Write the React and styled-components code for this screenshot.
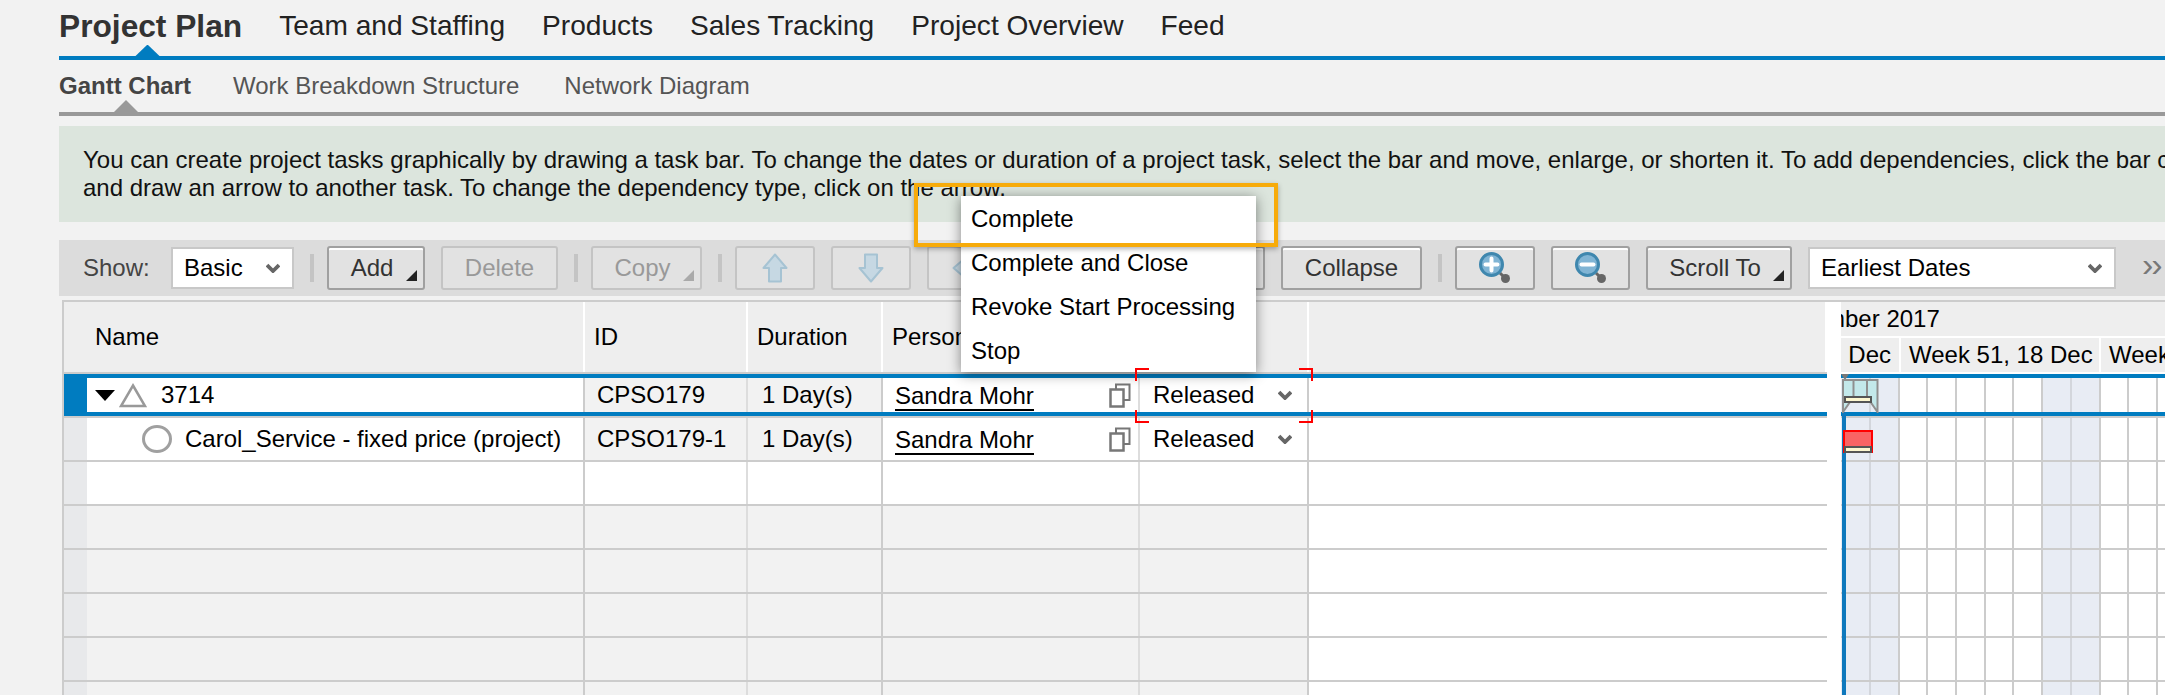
import React from 'react';
import styled, { createGlobalStyle } from 'styled-components';

const mainTabs = ['Team and Staffing', 'Products', 'Sales Tracking', 'Project Overview', 'Feed'];
const menuItems = ['Complete', 'Complete and Close', 'Revoke Start Processing', 'Stop'];
const emptyRows = [false, true, true, true, true, true];

// weekend columns of the gantt grid
const days = [true, true, false, false, false, false, false, true, true, false, false, false];

const Chevron = () => (
  <ChevronIcon viewBox="0 0 14 10">
    <path d="M1 2 L7 8 L13 2" fill="none" stroke="#666" strokeWidth="3.8" />
  </ChevronIcon>
);

const Arrow = ({ rotate }) => (
  <svg width="26" height="30" viewBox="0 0 26 30" style={{ transform: `rotate(${rotate}deg)` }}>
    <path d="M13 1.5 L24.5 15 L19 15 L19 28.5 L7 28.5 L7 15 L1.5 15 Z" fill="#c6d8e3" stroke="#a6c3d3" strokeWidth="2" strokeLinejoin="round" />
  </svg>
);

const Magnifier = ({ minus }) => (
  <svg width="32" height="32" viewBox="0 0 32 32">
    <path d="M21 21 L27 27" stroke="#666" strokeWidth="3" />
    <circle cx="26.5" cy="26.5" r="4.5" fill="#666" />
    <circle cx="12.5" cy="12.5" r="11" fill="#80b4d4" stroke="#3f87ae" strokeWidth="3" />
    <path d={minus ? 'M6.5 12.5 H18.5' : 'M6.5 12.5 H18.5 M12.5 6.5 V18.5'} stroke="#fff" strokeWidth="4" strokeLinecap="round" />
  </svg>
);

const CopyIcon = () => (
  <svg width="22" height="25" viewBox="0 0 22 25">
    <path d="M7 6 V1.5 H20.5 V17 H15" fill="none" stroke="#777" strokeWidth="2" />
    <rect x="1.5" y="6.5" width="13" height="17" fill="#fff" stroke="#777" strokeWidth="2.5" />
  </svg>
);

const ExpandIcon = () => (
  <svg width="20" height="11" viewBox="0 0 20 11">
    <path d="M0 0 H20 L10 11 Z" fill="#000" />
  </svg>
);

const TriangleIcon = () => (
  <svg width="28" height="25" viewBox="0 0 28 25">
    <path d="M14 2.5 L26 23 H2 Z" fill="#fff" stroke="#999" strokeWidth="2.5" />
  </svg>
);

const CircleIcon = () => (
  <svg width="30" height="28" viewBox="0 0 30 28">
    <ellipse cx="15" cy="14" rx="13.5" ry="12.5" fill="#fff" stroke="#a0a0a0" strokeWidth="3" />
  </svg>
);

const SummaryBar = () => (
  <svg width="37" height="34" viewBox="0 0 37 34">
    <path d="M1 1 H35.5 V33 L28.5 23 H8 L1 33 Z" fill="#c3e8ea" stroke="#8f8f8f" strokeWidth="2" />
    <path d="M11.5 1 V18 M25 1 V18" stroke="#8f8f8f" strokeWidth="2" />
  </svg>
);

const TreeRows = () => (
  <>
    <Row $selected>
      <Marker $selected />
      <NameCell>
        <ExpandIcon />
        <TriangleIcon />
        <NameText $gap={10}>3714</NameText>
      </NameCell>
      <Cell $width={163} $muted $light>CPSO179</Cell>
      <Cell $width={135} $pad={14} $muted>1 Day(s)</Cell>
      <PersonCell>
        <PersonLink>Sandra Mohr</PersonLink>
        <CopyIcon />
      </PersonCell>
      <StatusCell>
        Released
        <Chevron />
      </StatusCell>
      <RestCell />
    </Row>
    <Row $second>
      <Marker />
      <NameCell $indent={55}>
        <CircleIcon />
        <NameText $gap={9}>Carol_Service - fixed price (project)</NameText>
      </NameCell>
      <Cell $width={163} $muted $light>CPSO179-1</Cell>
      <Cell $width={135} $pad={14} $muted>1 Day(s)</Cell>
      <PersonCell>
        <PersonLink>Sandra Mohr</PersonLink>
        <CopyIcon />
      </PersonCell>
      <StatusCell>
        Released
        <Chevron />
      </StatusCell>
      <RestCell />
    </Row>
    {emptyRows.map((filled, index) => (
      <Row key={index}>
        <Marker />
        <NameCell $filled={filled} />
        <Cell $width={163} $muted={filled} $light />
        <Cell $width={135} $muted={filled} />
        <PersonCell $filled={filled} />
        <StatusCell $filled={filled} />
        <RestCell />
      </Row>
    ))}
  </>
);

const GanttRow = ({ selected, second }) => (
  <GanttLine $selected={selected} $second={second}>
    {days.map((weekend, index) => (
      <DayCell key={index} $first={index === 0} $weekend={weekend} $inner={index === 0 || index === 7} />
    ))}
  </GanttLine>
);

const App = () => (
  <Page>
    <GlobalStyle />
    <MainTabs>
      <ActiveMainTab>Project Plan</ActiveMainTab>
      {mainTabs.map((tab) => (
        <MainTab key={tab}>{tab}</MainTab>
      ))}
    </MainTabs>
    <SubTabs>
      <ActiveSubTab>Gantt Chart</ActiveSubTab>
      <SubTab>Work Breakdown Structure</SubTab>
      <SubTab $shift={3}>Network Diagram</SubTab>
    </SubTabs>
    <InfoBox>
      You can create project tasks graphically by drawing a task bar. To change the dates or duration of a project task, select the bar and move, enlarge, or shorten it. To add dependencies, click the bar connector
      <br />
      and draw an arrow to another task. To change the dependency type, click on the arrow.
    </InfoBox>
    <Toolbar>
      <ShowLabel>Show:</ShowLabel>
      <Select $width={123}>
        Basic
        <Chevron />
      </Select>
      <Separator />
      <ToolButton $width={98} $menu>Add</ToolButton>
      <ToolButton $width={117} disabled>Delete</ToolButton>
      <Separator />
      <ToolButton $width={111} $menu disabled>Copy</ToolButton>
      <Separator />
      <ToolButton $width={80} disabled><Arrow rotate={0} /></ToolButton>
      <ToolButton $width={80} disabled><Arrow rotate={180} /></ToolButton>
      <ToolButton $width={80} disabled><Arrow rotate={270} /></ToolButton>
      <ToolButton $width={80} disabled><Arrow rotate={90} /></ToolButton>
      <ToolButton $width={146}>Expand</ToolButton>
      <ToolButton $width={141}>Collapse</ToolButton>
      <Separator />
      <ToolButton $width={80}><Magnifier /></ToolButton>
      <ToolButton $width={79}><Magnifier minus /></ToolButton>
      <ToolButton $width={146} $menu>Scroll To</ToolButton>
      <Select $width={308}>
        Earliest Dates
        <Chevron />
      </Select>
      <Overflow>››</Overflow>
    </Toolbar>
    <Content>
      <TreeTable>
        <HeaderRow>
          <Marker $header />
          <HeaderCell $width={498} $indent={8}>Name</HeaderCell>
          <HeaderCell $width={163}>ID</HeaderCell>
          <HeaderCell $width={135}>Duration</HeaderCell>
          <HeaderCell $width={257}>Person Responsible</HeaderCell>
          <HeaderCell $width={169}>Status</HeaderCell>
          <HeaderCell $width={518} />
        </HeaderRow>
        <TreeRows />
      </TreeTable>
      <Splitter />
      <Gantt>
        <MonthRow>
          <MonthLabel>December 2017</MonthLabel>
        </MonthRow>
        <WeekRow>
          <WeekCell $width={58} $clip>Week 50, 11 Dec</WeekCell>
          <WeekCell $width={198}>Week 51, 18 Dec</WeekCell>
          <WeekCell $width={200}>Week 52, 25 Dec</WeekCell>
        </WeekRow>
        <GanttRow selected />
        <GanttRow second />
        {emptyRows.map((_, index) => (
          <GanttRow key={index} />
        ))}
        <TodayLine />
        <TodayNotch />
        <SummaryMark>
          <SummaryBar />
        </SummaryMark>
        <ProgressBar $top={94} />
        <TaskBar />
        <ProgressBar $top={144} />
      </Gantt>
    </Content>

    <ActionMenu>
      {menuItems.map((item) => (
        <MenuItem key={item}>{item}</MenuItem>
      ))}
    </ActionMenu>
    <Highlight />
    <FocusCorners>
      <Corner $top $left />
      <Corner $top />
      <Corner $left />
      <Corner />
    </FocusCorners>
  </Page>
);

// Estilos
const GlobalStyle = createGlobalStyle`
  html, body {
    margin: 0;
    padding: 0;
    background: #f2f2f2;
  }

  * {
    box-sizing: border-box;
  }
`;

const Page = styled.div`
  position: relative;
  width: 2165px;
  height: 695px;
  padding-left: 59px;
  overflow: hidden;
  background: #f2f2f2;
  color: #000;
  font-family: "Liberation Sans", Arial, sans-serif;
  font-size: 24px;
`;

const MainTabs = styled.div`
  display: flex;
  align-items: center;
  gap: 37px;
  height: 60px;
  padding-bottom: 4px;
  border-bottom: 4px solid #007cc0;
`;

const MainTab = styled.div`
  font-size: 28.1px;
  color: #222;
  white-space: nowrap;
`;

const ActiveMainTab = styled(MainTab)`
  position: relative;
  font-size: 31.7px;
  font-weight: bold;
  color: #333;

  &::after {
    content: '';
    position: absolute;
    left: 76px;
    bottom: -12px;
    width: 25px;
    height: 12px;
    background: #007cc0;
    clip-path: polygon(50% 0, 100% 100%, 0 100%);
  }
`;

const SubTabs = styled.div`
  display: flex;
  align-items: center;
  gap: 42px;
  height: 56px;
  border-bottom: 4px solid #999;
`;

const SubTab = styled.div`
  margin-left: ${(props) => props.$shift ?? 0}px;
  font-size: 24px;
  color: #555;
  white-space: nowrap;
`;

const ActiveSubTab = styled(SubTab)`
  position: relative;
  font-weight: bold;
  color: #444;

  &::after {
    content: '';
    position: absolute;
    left: 55px;
    bottom: -12px;
    width: 24px;
    height: 12px;
    background: #999;
    clip-path: polygon(50% 0, 100% 100%, 0 100%);
  }
`;

const InfoBox = styled.div`
  height: 96px;
  margin-top: 10px;
  padding: 20px 0 0 24px;
  background: #dce5dd;
  font-size: 24px;
  line-height: 28px;
  color: #111;
  white-space: nowrap;
  overflow: hidden;
`;

const Toolbar = styled.div`
  display: flex;
  align-items: center;
  gap: 16px;
  height: 56px;
  margin-top: 18px;
  padding-left: 24px;
  background: #dcdcdc;
`;

const ShowLabel = styled.span`
  width: 72px;
  color: #444;
`;

const Select = styled.div`
  display: flex;
  align-items: center;
  justify-content: space-between;
  flex: none;
  width: ${(props) => props.$width}px;
  height: 42px;
  padding: 0 12px 0 11px;
  background: #fff;
  border: 2px solid #c8c8c8;
`;

const ChevronIcon = styled.svg`
  flex: none;
  width: 14px;
  height: 10px;
`;

const Separator = styled.div`
  flex: none;
  width: 4px;
  height: 28px;
  margin-right: -3px;
  background: #c4c4c4;
`;

const ToolButton = styled.button`
  position: relative;
  display: flex;
  align-items: center;
  justify-content: center;
  flex: none;
  width: ${(props) => props.$width}px;
  height: 44px;
  padding: 0 ${(props) => (props.$menu ? 8 : 0)}px 0 0;
  background: #e2e2e2;
  border: 2px solid ${(props) => (props.disabled ? '#c4c4c4' : '#a0a0a0')};
  border-radius: 3px;
  box-shadow: ${(props) => (props.disabled ? 'none' : 'inset 0 2px 0 #fff')};
  color: ${(props) => (props.disabled ? '#999' : '#333')};
  font: inherit;

  &::after {
    content: '';
    display: ${(props) => (props.$menu ? 'block' : 'none')};
    position: absolute;
    right: 6px;
    bottom: 7px;
    width: 11px;
    height: 11px;
    background: ${(props) => (props.disabled ? '#aaa' : '#222')};
    clip-path: polygon(100% 0, 100% 100%, 0 100%);
  }
`;

const Overflow = styled.span`
  margin-left: 10px;
  padding-bottom: 8px;
  color: #777;
  font-size: 34px;
  line-height: 1;
  letter-spacing: -2px;
`;

const Content = styled.div`
  display: flex;
  height: 395px;
  margin-top: 4px;
  margin-left: 3px;
`;

const TreeTable = styled.div`
  flex: none;
  width: 1765px;
  border-top: 2px solid #ccc;
  border-left: 2px solid #ccc;
`;

const HeaderRow = styled.div`
  display: flex;
  height: 72px;
  background: #eee;
  border-bottom: 2px solid #ccc;
`;

const HeaderCell = styled.div`
  display: flex;
  align-items: center;
  flex: none;
  width: ${(props) => props.$width}px;
  padding-left: ${(props) => props.$indent ?? 9}px;
  border-right: 2px solid #fff;
  white-space: nowrap;
  overflow: hidden;
`;

const Row = styled.div`
  display: flex;
  height: ${(props) => (props.$selected ? 42 : props.$second ? 46 : 44)}px;
  border-top: ${(props) => (props.$second ? '2px solid #ccc' : 'none')};
  border-bottom: ${(props) => (props.$selected ? '4px solid #007cc0' : '2px solid #ccc')};
  ${(props) => props.$selected && 'border-top: 4px solid #007cc0;'}
`;

const Marker = styled.div`
  flex: none;
  width: 23px;
  margin: ${(props) => (props.$selected ? '-4px 0' : '0')};
  background: ${(props) => (props.$selected ? '#007cc0' : props.$header ? '#eee' : '#e8e9eb')};
`;

const Cell = styled.div`
  display: flex;
  align-items: center;
  flex: none;
  width: ${(props) => props.$width}px;
  padding-left: ${(props) => props.$pad ?? 12}px;
  background: ${(props) => (props.$muted ? '#f2f2f2' : '#fff')};
  border-right: 2px solid ${(props) => (props.$light ? '#ddd' : '#ccc')};
  white-space: nowrap;
`;

const NameCell = styled(Cell).attrs({ $width: 498 })`
  gap: 4px;
  padding-left: ${(props) => props.$indent ?? 8}px;
  background: ${(props) => (props.$filled ? '#f2f2f2' : '#fff')};
  border-right-color: #ccc;
`;

const NameText = styled.span`
  margin-left: ${(props) => props.$gap}px;
`;

const PersonCell = styled(Cell).attrs({ $width: 257 })`
  justify-content: space-between;
  padding-right: 7px;
  background: ${(props) => (props.$filled ? '#f2f2f2' : '#fff')};
  border-right-color: #ddd;
`;

const PersonLink = styled.span`
  line-height: 27px;
  box-shadow: 0 2px 0 #000;
`;

const StatusCell = styled(Cell).attrs({ $width: 169 })`
  justify-content: space-between;
  padding-right: 15px;
  padding-left: 13px;
  background: ${(props) => (props.$filled ? '#f2f2f2' : '#fff')};
`;

const RestCell = styled.div`
  flex: none;
  width: 518px;
  background: #fff;
`;

const Splitter = styled.div`
  flex: none;
  width: 14px;
  background: #fff;
  border-top: 2px solid #ccc;
`;

const Gantt = styled.div`
  position: relative;
  flex: none;
  width: 324px;
  background: #fff;
  border-top: 2px solid #ccc;
  overflow: hidden;
`;

const MonthRow = styled.div`
  display: flex;
  align-items: center;
  height: 34px;
  background: #eee;
  white-space: nowrap;
`;

const MonthLabel = styled.span`
  margin-left: -72px;
`;

const WeekRow = styled.div`
  display: flex;
  gap: 2px;
  height: 34px;
  margin: 2px 0;
`;

const WeekCell = styled.div`
  display: flex;
  align-items: center;
  justify-content: ${(props) => (props.$clip ? 'flex-end' : 'flex-start')};
  flex: none;
  width: ${(props) => props.$width}px;
  padding: 0 8px;
  background: #eee;
  white-space: nowrap;
  overflow: hidden;
`;

const GanttLine = styled.div`
  display: flex;
  height: ${(props) => (props.$selected ? 42 : props.$second ? 46 : 44)}px;
  border-top: ${(props) => (props.$selected ? '4px solid #007cc0' : props.$second ? '2px solid #ccc' : 'none')};
  border-bottom: ${(props) => (props.$selected ? '4px solid #007cc0' : '2px solid #ccc')};
`;

const DayCell = styled.div`
  flex: none;
  width: ${(props) => (props.$first ? 30 : 28.7)}px;
  background: ${(props) => (props.$weekend ? '#e8ecf4' : '#fff')};
  border-right: 2px solid ${(props) => (props.$inner ? '#d3d6dc' : '#ccc')};
`;

const TodayLine = styled.div`
  position: absolute;
  left: 1px;
  top: 110px;
  bottom: 0;
  width: 4px;
  background: #0f78bc;
`;

const TodayNotch = styled.div`
  position: absolute;
  left: 0;
  top: 72px;
  width: 8px;
  height: 6px;
  background: #777;
  clip-path: polygon(0 0, 100% 0, 50% 100%);
`;

const SummaryMark = styled.div`
  position: absolute;
  left: 1px;
  top: 77px;
  line-height: 0;
`;

const ProgressBar = styled.div`
  position: absolute;
  left: 3px;
  top: ${(props) => props.$top}px;
  width: 28px;
  height: 7px;
  background: #fdf7d0;
  border: 2px solid #555;
`;

const TaskBar = styled.div`
  position: absolute;
  left: 2px;
  top: 128px;
  width: 30px;
  height: 23px;
  background: #f96464;
  border: 2px solid #f00;
`;

const ActionMenu = styled.div`
  position: absolute;
  left: 961px;
  top: 196px;
  width: 295px;
  height: 176px;
  background: #fff;
  box-shadow: 0 2px 12px rgba(0, 0, 0, 0.45);
`;

const MenuItem = styled.div`
  display: flex;
  align-items: center;
  height: 44px;
  padding: 2px 0 0 10px;
  white-space: nowrap;
`;

const Highlight = styled.div`
  position: absolute;
  left: 914px;
  top: 183px;
  width: 364px;
  height: 64px;
  border: 4px solid #f7ab0a;
  box-shadow: 0 2px 5px rgba(0, 0, 0, 0.3);
`;

const FocusCorners = styled.div`
  position: absolute;
  left: 1135px;
  top: 368px;
  width: 178px;
  height: 55px;
`;

const Corner = styled.span`
  position: absolute;
  ${(props) => (props.$top ? 'top: 0;' : 'bottom: 0;')}
  ${(props) => (props.$left ? 'left: 0;' : 'right: 0;')}
  width: 14px;
  height: 13px;
  border: 0 solid #f00;
  ${(props) => (props.$top ? 'border-top-width: 2px;' : 'border-bottom-width: 2px;')}
  ${(props) => (props.$left ? 'border-left-width: 2px;' : 'border-right-width: 2px;')}
`;

export default App;
